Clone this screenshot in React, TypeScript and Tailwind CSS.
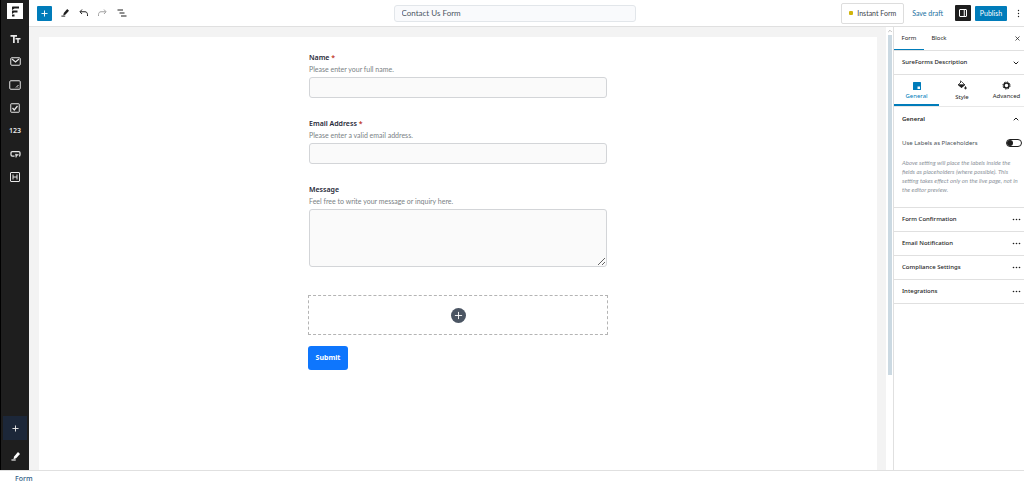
import type { ReactNode } from "react";
import { ChevronDown, ChevronUp, Plus, X } from "lucide-react";

const PenIcon = ({ size = 10 }: { size?: number }) => (
  <svg width={size} height={size} viewBox="0 0 20 20" fill="currentColor">
    <path d="M15.500 0 20 4.500l-8.500 9.500-6 2L7 10z" />
    <path d="M1 16.500h9.500V19H1z" />
  </svg>
);

const UndoIcon = () => (
  <svg width="9" height="8" viewBox="0 0 18 16" fill="none" stroke="currentColor" strokeWidth="2">
    <path d="M6 1 2 5.500 6 10M2.500 5.500H12c3 0 5 2 5 6V14" />
  </svg>
);

const blocks: { label: string; icon: ReactNode }[] = [
  {
    label: "Text",
    icon: (
      <svg width="11" height="10" viewBox="0 0 22 20" fill="currentColor">
        <path d="M1 2h13v3.500H9.500V18H6V5.500H1z" />
        <path d="M11 8h10v3h-3.500v7h-3v-7H11z" />
      </svg>
    ),
  },
  {
    label: "Email",
    icon: (
      <svg width="11" height="9" viewBox="0 0 22 18" fill="none" stroke="currentColor" strokeWidth="2">
        <rect x="1.500" y="1.500" width="19" height="15" rx="2" />
        <path d="m4 4 7 6 7-6" strokeWidth="2.500" />
      </svg>
    ),
  },
  {
    label: "Textarea",
    icon: (
      <svg width="12" height="10" viewBox="0 0 24 20" fill="none" stroke="currentColor" strokeWidth="2">
        <rect x="1.500" y="1.500" width="21" height="17" rx="2" />
        <path d="m14 15 5-5M18 15l1-1" />
      </svg>
    ),
  },
  {
    label: "Checkbox",
    icon: (
      <svg width="10" height="10" viewBox="0 0 20 20" fill="none" stroke="currentColor" strokeWidth="2">
        <rect x="1.500" y="1.500" width="17" height="17" rx="1" />
        <path d="m5 10 3.500 4L15 6" strokeWidth="2.500" />
      </svg>
    ),
  },
  { label: "Number", icon: <span className="pt-0.5 text-[7px] font-semibold">123</span> },
  {
    label: "Button",
    icon: (
      <svg width="11" height="8" viewBox="0 0 22 16" fill="none" stroke="currentColor" strokeWidth="2.500">
        <path d="M9 12H4.500Q2 12 2 9.500V5.500Q2 3 4.500 3h13Q20 3 20 5.500v4Q20 12 18 12" />
        <path d="m11 8 6 1.500-3.500 2L12 15z" fill="currentColor" strokeWidth="1" />
      </svg>
    ),
  },
  {
    label: "Heading",
    icon: (
      <svg width="10" height="10" viewBox="0 0 20 20" fill="none" stroke="currentColor" strokeWidth="2">
        <rect x="1" y="1" width="18" height="18" rx="1" />
        <path d="M6 5v10M14 5v10M6 10h8" />
      </svg>
    ),
  },
];

const fields = [
  { id: "name", label: "Name", required: true, help: "Please enter your full name.", multiline: false },
  { id: "email", label: "Email Address", required: true, help: "Please enter a valid email address.", multiline: false },
  { id: "message", label: "Message", required: false, help: "Feel free to write your message or inquiry here.", multiline: true },
];

const settings = ["Form Confirmation", "Email Notification", "Compliance Settings", "Integrations"];

function BlockBar() {
  return (
    <nav className="flex w-[29px] shrink-0 flex-col items-center border-l border-black bg-[#1e1e1e] text-[#e8e8e8]">
      <a href="#" aria-label="SureForms" className="mt-[3px] mb-2 flex size-4 items-center justify-center bg-white text-[#1e1e1e]">
        <svg width="10" height="12" viewBox="0 0 20 24" fill="currentColor">
          <path d="M5 3h13v4h-9l-5 3V4zM4 11h11v4H8l-4 3zM4 19h5v4H4z" />
        </svg>
      </a>
      {blocks.map((block) => (
        <button key={block.label} aria-label={block.label} className="flex h-[23px] w-full items-center justify-center">
          {block.icon}
        </button>
      ))}
      <button aria-label="Add block" className="mt-auto flex size-6 items-center justify-center bg-[#1c2739]">
        <Plus size={9} strokeWidth={2.5} />
      </button>
      <button aria-label="Edit" className="mt-1 mb-0.5 flex size-6 items-center justify-center text-white">
        <PenIcon size={9} />
      </button>
    </nav>
  );
}

function TopBar() {
  return (
    <header className="flex h-[27px] shrink-0 items-center border-b border-[#e0e0e0] bg-white pl-2 text-[#1e1e1e]">
      <div className="flex flex-1 items-center">
        <button aria-label="Toggle inserter" className="mr-[3px] flex size-[15px] items-center justify-center rounded-[1px] bg-[#007cba] text-white">
          <Plus size={9} strokeWidth={2.5} />
        </button>
        <button aria-label="Tools" className="flex w-[19px] justify-center">
          <PenIcon size={8} />
        </button>
        <button aria-label="Undo" className="flex w-[19px] justify-center">
          <UndoIcon />
        </button>
        <button aria-label="Redo" className="flex w-[19px] -scale-x-100 justify-center text-[#a0a0a0]">
          <UndoIcon />
        </button>
        <button aria-label="Document overview" className="flex w-[19px] justify-center">
          <svg width="10" height="8" viewBox="0 0 20 16" stroke="currentColor" strokeWidth="2">
            <path d="M1 2h11M5 8h10M8 14h11" />
          </svg>
        </button>
      </div>
      <input
        aria-label="Form title"
        defaultValue="Contact Us Form"
        className="mr-8 h-[17px] w-[242px] rounded-[3px] border border-[#e2e6ea] bg-[#f9fafc] px-[7px] font-['Lato',sans-serif] text-[8px] text-[#4b5563]"
      />
      <div className="flex flex-1 items-center justify-end font-['Lato',sans-serif]">
        <button className="flex h-[21px] items-center gap-1 rounded-[2px] border border-[#dddddd] px-[7px] text-[7px] text-[#3c434a]">
          <span className="size-1 rounded-[1px] bg-[#d0b40c]" />
          Instant Form
        </button>
        <button className="ml-2 text-[7px] text-[#2271a1]">Save draft</button>
        <button aria-label="Settings" className="ml-3 flex size-4 items-center justify-center rounded-[1px] bg-[#1e1e1e] text-white">
          <svg width="8" height="8" viewBox="0 0 16 16" fill="none" stroke="currentColor" strokeWidth="2">
            <rect x="1" y="1" width="14" height="14" rx="1" />
            <path d="M10.500 1v14" />
          </svg>
        </button>
        <button className="ml-1 h-[15px] w-8 rounded-[1px] bg-[#007cba] text-[7px] text-white">Publish</button>
        <button aria-label="Options" className="ml-2.5 mr-1">
          <svg width="3" height="9" viewBox="0 0 3 9" fill="currentColor">
            <circle cx="1.500" cy="1.500" r="0.700" />
            <circle cx="1.500" cy="4.500" r="0.700" />
            <circle cx="1.500" cy="7.500" r="0.700" />
          </svg>
        </button>
      </div>
    </header>
  );
}

function FormCanvas() {
  return (
    <main className="flex-1 overflow-hidden bg-[#f3f3f3] pt-2.5 pr-[9px] pl-2.5">
      <form className="h-full bg-white pt-[15px]" onSubmit={(e) => e.preventDefault()}>
        <div className="mx-auto max-w-[300px]">
          <div className="flex flex-col gap-5 px-px">
            {fields.map((field) => (
              <div key={field.id} className="flex flex-col">
                <label htmlFor={field.id} className="text-[7px] leading-3 font-semibold text-[#1f2937]">
                  {field.label}
                  {field.required && <span className="text-[#c0392b]"> *</span>}
                </label>
                <p className="mb-0.5 font-['Lato',sans-serif] text-[7px] leading-[11px] text-[#7a7f85]">{field.help}</p>
                {field.multiline ? (
                  <textarea id={field.id} className="h-[58px] rounded-[3px] border border-[#d3d5d8] bg-[#fafafa] px-2 text-[7px]" />
                ) : (
                  <input id={field.id} className="h-[21px] rounded-[3px] border border-[#d3d5d8] bg-[#fafafa] px-2 text-[7px]" />
                )}
              </div>
            ))}
          </div>
          <button
            type="button"
            aria-label="Add field"
            className="mt-7 flex h-10 w-full items-center justify-center border border-dashed border-[#b4b4b4]"
          >
            <span className="flex size-[15px] items-center justify-center rounded-full bg-[#4b5563] text-white">
              <Plus size={11} />
            </span>
          </button>
          <button className="mt-[11px] h-6 w-10 rounded-[3px] bg-[#0e76fd] text-[7px] font-bold text-white">Submit</button>
        </div>
      </form>
    </main>
  );
}

function CanvasScrollbar() {
  return (
    <div className="flex w-[7px] flex-col items-center bg-white">
      <ChevronUp size={6} className="my-px text-[#7a7a7a]" />
      <div className="h-[340px] w-1 bg-[#cbd9e2]" />
    </div>
  );
}

function SettingsPanel() {
  return (
    <aside className="w-[131px] shrink-0 border-l border-[#e0e0e0] bg-white text-[6px] text-[#1e1e1e]">
      <div className="flex h-6 items-stretch border-b border-[#e0e0e0]">
        <button className="w-[30px] border-b border-[#007cba]">Form</button>
        <button className="w-[30px]">Block</button>
        <button aria-label="Close settings" className="mr-[3px] ml-auto">
          <X size={7} strokeWidth={2.5} />
        </button>
      </div>
      <button className="flex h-6 w-full items-center justify-between border-b border-[#e0e0e0] pr-1 pl-2 font-medium">
        SureForms Description
        <ChevronDown size={8} strokeWidth={3} />
      </button>
      <div className="grid h-8 grid-cols-[45px_46px_1fr] border-b border-[#e8e8e8]">
        <button className="flex flex-col items-center justify-center gap-0.5 border-b-2 border-[#007cba] pt-[3px] text-[#007cba]">
          <svg width="8" height="8" viewBox="0 0 16 16">
            <rect width="16" height="16" rx="1" fill="currentColor" />
            <path d="M9 9h5v5H9z" fill="#ffffff" />
          </svg>
          General
        </button>
        <button className="flex flex-col items-center justify-center gap-[3px]">
          <svg width="10" height="10" viewBox="0 0 20 20" fill="none" stroke="currentColor" strokeWidth="1.500">
            <path d="M2.500 9.500 9 3l6.500 6.500L9 15z" />
            <path d="M2.500 9.500h13L9 15z" fill="currentColor" />
            <path d="M7 1v5M17 13c2 3 2 5 0 5s-2-2 0-5z" fill="currentColor" />
          </svg>
          Style
        </button>
        <button className="flex flex-col items-center justify-center gap-0.5 pl-1">
          <svg width="9" height="9" viewBox="0 0 18 18" fill="none" stroke="currentColor">
            <circle cx="9" cy="9" r="5" strokeWidth="3" />
            <circle cx="9" cy="9" r="7.200" strokeWidth="2" strokeDasharray="2.800 2.850" />
          </svg>
          Advanced
        </button>
      </div>
      <section className="h-[101px] border-b border-[#e0e0e0]">
        <button className="flex h-6 w-full items-center justify-between pr-1 pl-2 font-semibold">
          General
          <ChevronUp size={8} strokeWidth={3} />
        </button>
        <div className="mt-1 flex h-4 items-center justify-between pr-0.5 pl-2">
          <label htmlFor="placeholders" className="text-[#4a4f55]">
            Use Labels as Placeholders
          </label>
          <input
            id="placeholders"
            type="checkbox"
            role="switch"
            className="h-2 w-4 appearance-none rounded-full border border-[#1e1e1e] before:block before:size-1.5 before:rounded-full before:bg-[#1e1e1e] checked:before:ml-2"
          />
        </div>
        <p className="mt-[7px] pl-2 font-['Lato',sans-serif] leading-[9px] whitespace-nowrap text-[#8d949c] italic">
          Above setting will place the labels inside the
          <br />
          fields as placeholders (where possible). This
          <br />
          setting takes effect only on the live page, not in
          <br />
          the editor preview.
        </p>
      </section>
      {settings.map((name) => (
        <button key={name} className="flex h-6 w-full items-center justify-between border-b border-[#e0e0e0] pr-[3px] pl-2 font-medium">
          {name}
          <svg width="9" height="3" viewBox="0 0 9 3" fill="currentColor">
            <circle cx="1.500" cy="1.500" r="0.800" />
            <circle cx="4.500" cy="1.500" r="0.800" />
            <circle cx="7.500" cy="1.500" r="0.800" />
          </svg>
        </button>
      ))}
    </aside>
  );
}

export default function App() {
  return (
    <div className="flex h-screen flex-col bg-white font-['Noto_Sans','Open_Sans',sans-serif]">
      <div className="flex min-h-0 flex-1">
        <BlockBar />
        <div className="flex min-w-0 flex-1 flex-col">
          <TopBar />
          <div className="flex min-h-0 flex-1">
            <FormCanvas />
            <CanvasScrollbar />
            <SettingsPanel />
          </div>
        </div>
      </div>
      <footer className="flex h-3.5 shrink-0 items-center border-t border-[#e0e0e0] pt-1 pl-[15px] text-[7px] font-medium text-[#2c5a85]">
        <a href="#">Form</a>
      </footer>
    </div>
  );
}
